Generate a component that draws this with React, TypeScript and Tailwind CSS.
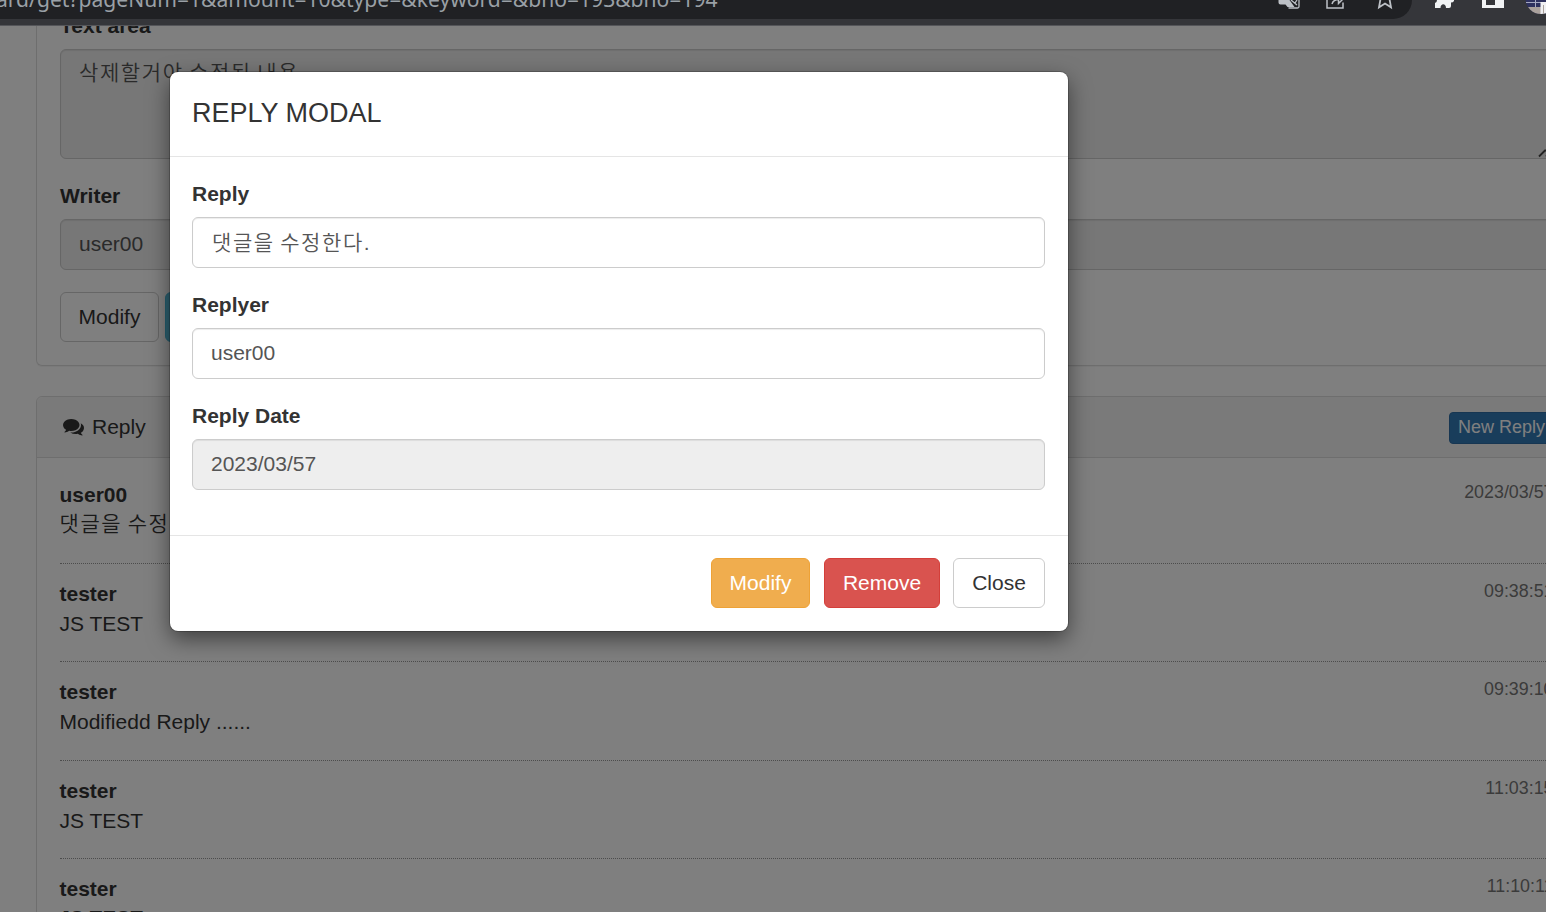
import React from 'react';

interface ReplyItem {
  id: number;
  replyer: string;
  reply: string;
  date: string;
}

const replies: ReplyItem[] = [
  { id: 1, replyer: 'user00', reply: '댓글을 수정한다.', date: '2023/03/57' },
  { id: 2, replyer: 'tester', reply: 'JS TEST', date: '09:38:51' },
  { id: 3, replyer: 'tester', reply: 'Modifiedd Reply ......', date: '09:39:10' },
  { id: 4, replyer: 'tester', reply: 'JS TEST', date: '11:03:15' },
  { id: 5, replyer: 'tester', reply: 'JS TEST', date: '11:10:11' },
];

const isKorean = (text: string) => /[\uac00-\ud7a3]/.test(text);

// Korean glyphs are set lighter and wider than the latin ones
const koreanText = 'font-[350] tracking-[1.6px] [word-spacing:-2px]';

const CommentsIcon: React.FC = () => (
  <svg className="mr-[8px] mb-[2px]" width="21" height="21" viewBox="0 0 1792 1792" fill="currentColor">
    <path d="M1408 768q0 139-94 257t-256.5 186.5-353.5 68.5q-86 0-176-16-124 88-278 128-36 9-86 16h-3q-11 0-20.5-8t-11.5-21q-1-3-1-6.5t.5-6.5 2-6l2.5-5 3.5-5.5 4-5 4.5-5 4-4.500q5-6 23-25t26-29.500 22.500-29 25-38.500 20.500-44q-124-72-195-177t-71-224q0-139 94-257t256.500-186.500 353.500-68.500 353.500 68.500 256.500 186.500 94 257zm384 256q0 120-71 224.500t-195 176.500q10 24 20.500 44t25 38.500 22.500 29 26 29.500 23 25q1 1 4 4.500t4.500 5 4 5 3.500 5.500l2.500 5 2 6 .5 6.500-1 6.500q-3 14-13 22t-22 7q-50-7-86-16-154-40-278-128-90 16-176 16-271 0-472-132 58 4 88 4 161 0 309-45t264-129q125-92 192-212t67-254q0-77-23-152 129 71 204 178t75 230z" />
  </svg>
);

const BrowserBar: React.FC = () => (
  <div className="relative z-20 h-[26px] shrink-0 bg-[#35363a] border-b border-[#55565a] overflow-hidden">
    <div className="w-[1412px] h-[19px] bg-[#202124] rounded-br-[19px] overflow-hidden">
      <div className="-ml-[4px] -mt-[14px] h-[26px] leading-[26px] whitespace-nowrap font-['Noto_Sans',sans-serif] text-[21.08px] text-[#9aa0a6]">
        ard/get?pageNum=1&amp;amount=10&amp;type=&amp;keyword=&amp;bno=193&amp;bno=194
      </div>
    </div>
    <svg className="absolute right-0 top-0" width="300" height="25" viewBox="0 0 300 25">
      {/* translate */}
      <path d="M32.500 0h11l5 7h-7l-2-2.500h-5q-2 0-2-2z" fill="#bdc1c6" />
      <path d="M42.500 8h9q1.500 0 1.500-1.500V0M45 0l6 5M49 3l2-3" fill="none" stroke="#bdc1c6" strokeWidth="1.300" />
      {/* share */}
      <path d="M81 0v8h16V2.500" fill="none" stroke="#bdc1c6" strokeWidth="1.500" />
      <path d="M86 4c.8-3 3.500-4.500 7-4.500M92.500-2v5.500l4-4" fill="none" stroke="#bdc1c6" strokeWidth="1.500" />
      {/* bookmark star */}
      <path d="M134.500-1l-1.500 8.300 6-3.800 6 3.800-1.500-8.300" fill="none" stroke="#bdc1c6" strokeWidth="1.800" />
      {/* extensions */}
      <path d="M191 0h17v1q-1 1.500-3 1.500V6q0 2-2 2h-3c0-5-5.500-5-5.500 0H189V3q2-.5 2-3z" fill="#f1f3f4" />
      {/* side panel */}
      <path d="M236 0h4v5h9V0h9v8h-22z" fill="#f1f3f4" />
      {/* profile */}
      <clipPath id="avatar"><circle cx="295" cy="-1.500" r="15.500" /></clipPath>
      <g clipPath="url(#avatar)">
        <path d="M278 0h22v15h-22z" fill="#2e315e" />
        <path d="M278 2h18v1h-18zM289 0h1v7h-1z" fill="#a6a9c2" />
        <path d="M280 7h15v8h-15z" fill="#aaa19c" />
        <path d="M294.500 2h6v12h-6z" fill="#f0f0f2" />
        <path d="M297 5h1v9h-1z" fill="#aaa19c" />
      </g>
    </svg>
  </div>
);

interface FieldProps {
  label: string;
  value: string;
  disabled?: boolean;
  className?: string;
}

const Field: React.FC<FieldProps> = ({ label, value, disabled, className = 'pb-[2px]' }) => (
  <div className="mb-[22px]">
    <label className="block mb-[8px] leading-[30px] font-bold">{label}</label>
    <div
      className={`h-[51px] px-[18px] flex items-center border border-[#ccc] rounded-md text-[#555] shadow-[inset_0_1px_1px_rgba(0,0,0,0.075)] ${disabled ? 'bg-[#eee]' : 'bg-white'} ${className}`}
    >
      <span className={isKorean(value) ? koreanText : ''}>{value}</span>
    </div>
  </div>
);

const ReplyRow: React.FC<{ item: ReplyItem }> = ({ item }) => (
  <li className="group h-[98.5px] pt-[15px] border-b border-dotted border-[#999] leading-[30px]">
    <div className={`flex justify-between group-last:h-[29px] ${isKorean(item.reply) ? 'h-[29px]' : 'h-[30px]'}`}>
      <strong>{item.replyer}</strong>
      <small className="mr-[0.5px] text-[17.85px] leading-[24px] text-[#777]">{item.date}</small>
    </div>
    <p className={isKorean(item.reply) ? koreanText : ''}>{item.reply}</p>
  </li>
);

const ReplyModal: React.FC = () => (
  <div className="w-[898px] h-[559px] bg-white rounded-[8px] shadow-[0_0_0_1px_rgba(0,0,0,0.2),0_8px_22px_rgba(0,0,0,0.5)]">
    <div className="h-[85px] px-[22px] pt-[22px] border-b border-[#e5e5e5]">
      <h4 className="text-[27px] leading-[39px]">REPLY MODAL</h4>
    </div>
    <div className="h-[378px] pl-[22px] pr-[23px] pt-[22px]">
      <Field label="Reply" value="댓글을 수정한다." className="pl-[19px]" />
      <Field label="Replyer" value="user00" />
      <Field label="Reply Date" value="2023/03/57" disabled />
    </div>
    <div className="flex justify-end border-t border-[#e5e5e5] pt-[22px] pr-[23px]">
      <button className="w-[99px] h-[50px] rounded-md border border-[#eea236] bg-[#f0ad4e] text-white">Modify</button>
      <button className="ml-[14px] w-[116px] h-[50px] rounded-md border border-[#d43f3a] bg-[#d9534f] text-white">Remove</button>
      <button className="ml-[13px] w-[92px] h-[50px] rounded-md border border-[#ccc] bg-white">Close</button>
    </div>
  </div>
);

export default function App() {
  return (
    <div className="relative w-[1546px] h-[912px] flex flex-col overflow-hidden bg-white text-[#333] text-[21px] font-['Liberation_Sans','Noto_Sans_CJK_KR',sans-serif]">
      <BrowserBar />

      <div className="flex-1 min-h-0 overflow-hidden pl-[36px]">
        {/* Board panel, scrolled partly under the browser bar */}
        <div className="-mt-[15px] w-[1542px] h-[355px] px-[23px] border border-t-0 border-[#ddd] rounded-b-md shadow-[0_1px_1px_rgba(0,0,0,0.05)]">
          <label className="block leading-[30px] font-bold">Text area</label>
          <div className={`relative mt-[8px] h-[110px] px-[18px] pt-[8px] border border-[#ccc] rounded-md bg-[#eee] text-[#555] leading-[30px] shadow-[inset_0_1px_1px_rgba(0,0,0,0.075)] ${koreanText}`}>
            삭제할거야 수정된 내용
            <svg className="absolute right-0 bottom-0" width="15" height="15" viewBox="0 0 15 15">
              <path d="M1 13.500l6-6h2M8 13.500l4-4" fill="none" stroke="#444" strokeWidth="1.800" />
            </svg>
          </div>
          <div className="mt-[22px]">
            <Field label="Writer" value="user00" disabled />
          </div>
          <div className="flex gap-[6px]">
            <button className="w-[99px] h-[50px] border border-[#ccc] rounded-md bg-white">Modify</button>
            <button className="w-[76px] h-[50px] border border-[#46b8da] rounded-md bg-[#5bc0de] text-white" aria-label="List" />
          </div>
        </div>

        {/* Reply panel */}
        <div className="w-[1542px] mt-[30px] border border-[#ddd] rounded-t-md">
          <div className="h-[61px] flex items-center justify-between pl-[26px] pr-[23px] border-b border-[#ddd] bg-[#f5f5f5] rounded-t-md">
            <div className="flex items-center">
              <CommentsIcon />
              Reply
            </div>
            <button className="mt-[2px] w-[105px] h-[32px] pb-[2px] border border-[#2e6da4] rounded bg-[#337ab7] text-white text-[18px] leading-[27px] whitespace-nowrap">New Reply</button>
          </div>
          <ul className="ml-[22.5px] mr-[23px] pt-[7px]">
            {replies.map((item) => (
              <ReplyRow key={item.id} item={item} />
            ))}
          </ul>
        </div>
      </div>

      {/* Backdrop */}
      <div className="absolute inset-x-0 top-[26px] bottom-0 z-10 bg-black/50 pl-[170px] pt-[46px]">
        <ReplyModal />
      </div>
    </div>
  );
}
